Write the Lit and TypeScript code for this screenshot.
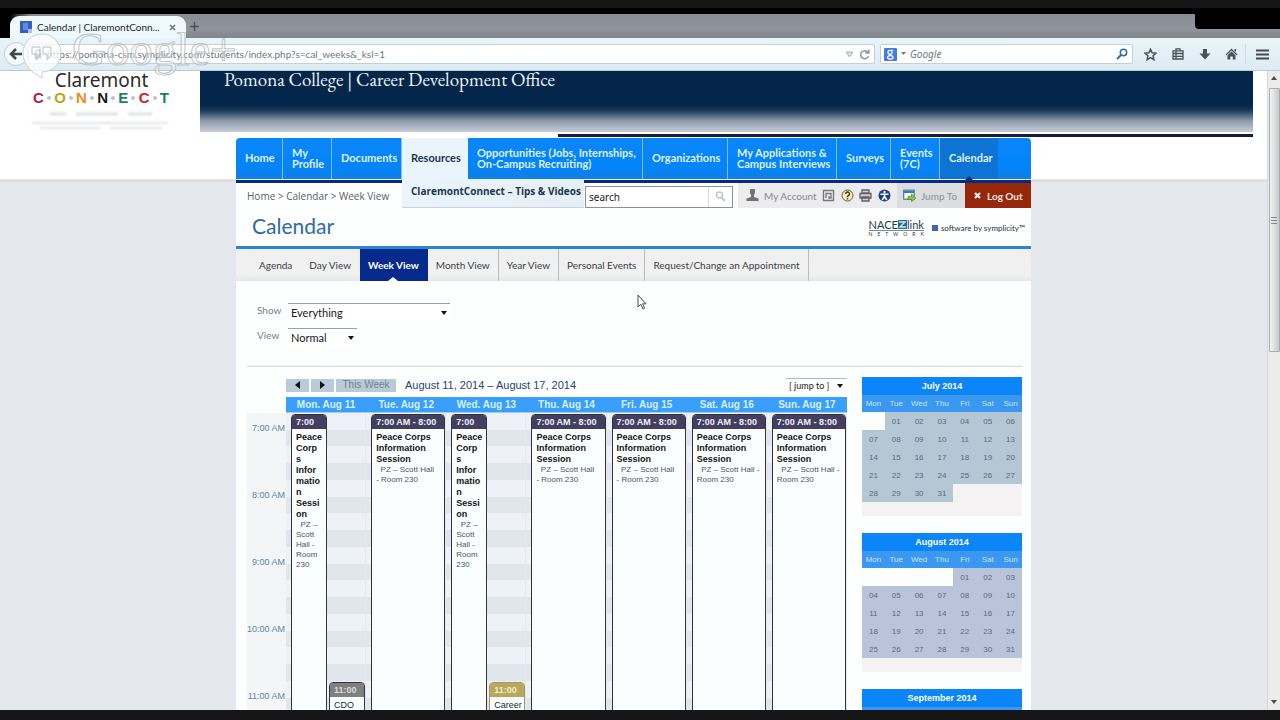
import { LitElement, html, css, svg } from "lit";
import { customElement } from "lit/decorators.js";

const NAV: { label: string; w: number; kind?: string }[] = [
  { label: "Home", w: 47 },
  { label: "My Profile", w: 49 },
  { label: "Documents", w: 70 },
  { label: "Resources", w: 66, kind: "open" },
  { label: "Opportunities (Jobs, Internships, On-Campus Recruiting)", w: 175 },
  { label: "Organizations", w: 85 },
  { label: "My Applications & Campus Interviews", w: 109 },
  { label: "Surveys", w: 54 },
  { label: "Events (7C)", w: 49 },
  { label: "Calendar", w: 58, kind: "current" },
];

const TABS = ["Agenda", "Day View", "Week View", "Month View", "Year View", "Personal Events", "Request/Change an Appointment"];

interface Ev { time: string; title: string; place: string; narrow?: boolean; hours?: number; tone?: string }

const NARROW: Ev = {
  time: "7:00",
  title: "Peace\nCorp\ns\nInfor\nmatio\nn\nSessi\non",
  place: "\u00a0 PZ –\nScott\nHall -\nRoom\n230",
  narrow: true,
};
const WIDE: Ev = {
  time: "7:00 AM - 8:00",
  title: "Peace Corps\nInformation\nSession",
  place: "\u00a0 PZ – Scott Hall\n- Room 230",
};
const WIDE_END: Ev = { ...WIDE, place: "\u00a0 PZ – Scott Hall -\nRoom 230" };

const DAYS: { name: string; events: Ev[] }[] = [
  { name: "Mon. Aug 11", events: [NARROW, { time: "11:00", title: "", place: "CDO", narrow: true, hours: 4, tone: "gray" }] },
  { name: "Tue. Aug 12", events: [WIDE] },
  { name: "Wed. Aug 13", events: [NARROW, { time: "11:00", title: "", place: "Career", narrow: true, hours: 4, tone: "gold" }] },
  { name: "Thu. Aug 14", events: [WIDE] },
  { name: "Fri. Aug 15", events: [WIDE] },
  { name: "Sat. Aug 16", events: [WIDE_END] },
  { name: "Sun. Aug 17", events: [WIDE_END] },
];

const HOURS = ["7:00 AM", "8:00 AM", "9:00 AM", "10:00 AM", "11:00 AM"];
const HOUR_HEIGHT = 67;
const WEEKDAYS = ["Mon", "Tue", "Wed", "Thu", "Fri", "Sat", "Sun"];

const MONTHS = [
  { name: "July 2014", offset: 1, days: 31, tone: "" },
  { name: "August 2014", offset: 4, days: 31, tone: "violet" },
  { name: "September 2014", offset: 0, days: 30, tone: "" },
];

const CONNECT: [string, string][] = [
  ["C", "#b3203f"], ["O", "#c0a512"], ["N", "#f08a1d"], ["N", "#15181c"], ["E", "#1d7f66"], ["C", "#d3202c"], ["T", "#11805f"],
];

@customElement("browser-chrome")
export class BrowserChrome extends LitElement {
  static styles = css`
    :host { display: block; font-family: Lato, "Open Sans", sans-serif; color: #3c434a; }
    button { border: 0; padding: 0; background: none; display: grid; place-items: center; }
    svg { flex: none; }
    .strip { display: flex; height: 24px; background: linear-gradient(90deg, #000 10px, transparent 30px), linear-gradient(#868d94, #8f969d 60%, #7f858a); }
    .tab { display: flex; align-items: center; gap: 5px; width: 176px; box-sizing: border-box; margin: 2px 0 0 10px; padding: 0 14px 0 10px; border-radius: 9px 9px 0 0; background: #eff8fd; font-size: 10px; line-height: 22px; color: #22282d; }
    .tab span { white-space: nowrap; margin-right: 4px; }
    .plus { width: 16px; }
    .corner { width: 85px; height: 15px; margin-left: auto; background: #000; border-radius: 0 0 0 4px; }
    .bar { display: flex; align-items: center; height: 32px; padding: 0 2px 0 4px; background: linear-gradient(#eaf4fa, #dcebf3); border-bottom: 1px solid #b9cbd3; }
    .back { width: 24px; height: 24px; border: 1px solid #bccdd6; border-radius: 50%; background: #f4fafd; }
    .url, .find { display: flex; align-items: center; height: 20px; box-sizing: border-box; border: 1px solid #c3d0d8; border-radius: 2px; background: #fff; }
    .url { flex: 1; padding: 0 4px 0 5px; gap: 5px; }
    .find { width: 253px; margin: 0 4px 0 5px; padding: 0 4px 0 3px; gap: 4px; }
    input { flex: 1; min-width: 0; border: 0; padding: 0; outline: 0; background: none; font: 10px Lato, sans-serif; color: #70777d; }
    .find input { font: italic 10px "Noto Sans", sans-serif; }
    .find input::placeholder { color: #70777d; opacity: 1; }
    .tools { display: flex; align-items: center; }
    .tools button { width: 27px; height: 20px; }
    .tools .menu { width: 33px; border-left: 1px solid #cfdde4; }
  `;
  render() {
    return html`
      <div class="strip">
        <div class="tab">
          <svg width="12" height="12"><rect width="12" height="12" fill="#3562b8" /><rect x="3" y="2" width="5" height="7" fill="#5f8be0" /><rect x="8" y="8" width="4" height="4" fill="#a9c0ee" /></svg>
          <span>Calendar | ClaremontConn...</span>
          <button aria-label="Close tab"><svg width="7" height="7"><path d="M1 1L6 6M6 1L1 6" stroke="#70777c" stroke-width="1.600" /></svg></button>
        </div>
        <button class="plus" aria-label="New tab"><svg width="9" height="9"><path d="M4.500 0V9M0 4.500H9" stroke="#4b5258" stroke-width="1.500" /></svg></button>
        <div class="corner"></div>
      </div>
      <div class="bar">
        <button class="back" aria-label="Back"><svg width="14" height="12"><path d="M7 1L2 6L7 11M2 6H13" fill="none" stroke="#3f464c" stroke-width="2.600" /></svg></button>
        <div class="url">
          <svg width="8" height="10"><path d="M2 5V3a2 2 0 0 1 4 0V5" fill="none" stroke="#5b6268" stroke-width="1.400" /><rect x="0.500" y="4.500" width="7" height="5" fill="#5b6268" /></svg>
          <input aria-label="Address" value="https://pomona-csm.symplicity.com/students/index.php?s=cal_weeks&_ksl=1" />
          <svg width="9" height="7"><path d="M1 1H8L4.500 6Z" fill="#d9dee1" stroke="#aab2b7" /></svg>
          <svg width="11" height="11"><path d="M9 3.500A4 4 0 1 0 9.500 7M9.800 0.500V4H6.300" fill="none" stroke="#8d959b" stroke-width="1.500" /></svg>
        </div>
        <div class="find">
          <svg width="13" height="13"><rect width="13" height="13" rx="1" fill="#4479e6" /><circle cx="6" cy="4.300" r="2" fill="none" stroke="#fff" stroke-width="1.300" /><ellipse cx="6.300" cy="9.400" rx="2.700" ry="1.800" fill="none" stroke="#fff" stroke-width="1.300" /><path d="M7.500 2.300H9.300M7 6L6 7.500" stroke="#fff" /></svg>
          <svg width="5" height="4"><path d="M0 0H5L2.500 3Z" fill="#71787e" /></svg>
          <input aria-label="Search the web" placeholder="Google" />
          <svg width="12" height="12"><circle cx="7.500" cy="4.500" r="3.200" fill="none" stroke="#2d6fa3" stroke-width="1.500" /><path d="M5 7L1 11" stroke="#2d6fa3" stroke-width="1.900" /></svg>
        </div>
        <div class="tools">
          <button aria-label="Bookmark"><svg width="13" height="13"><path d="M6.500 1.200L8.100 4.800L12 5.200L9.100 7.800L9.900 11.700L6.500 9.700L3.100 11.700L3.900 7.800L1 5.200L4.900 4.800Z" fill="none" stroke="#4a5157" stroke-width="1.500" /></svg></button>
          <button aria-label="Bookmarks list"><svg width="12" height="12"><path d="M4 2.500V0.800H8V2.500M1 2.800H11V11H1ZM1 5.500H11M1 8.300H11M4 3V11" fill="none" stroke="#4a5157" stroke-width="1.300" /></svg></button>
          <button aria-label="Downloads"><svg width="12" height="12"><path d="M4 1H8V5.500H11.500L6 11.500L0.500 5.500H4Z" fill="#4a5157" /></svg></button>
          <button aria-label="Home page"><svg width="13" height="12"><path d="M6.500 0.500L12.500 6.500L11.500 7.300L6.500 2.600L1.500 7.300L0.500 6.500ZM6.500 3.600L10.500 7.300V11.500H7.800V8.500H5.200V11.500H2.500V7.300ZM9.500 1H11V4L9.500 2.600Z" fill="#4a5157" /></svg></button>
          <button class="menu" aria-label="Menu"><svg width="13" height="11"><path d="M0 1.500H13M0 5.500H13M0 9.500H13" stroke="#444b51" stroke-width="2" /></svg></button>
        </div>
      </div>`;
  }
}

@customElement("mini-month")
export class MiniMonth extends LitElement {
  static properties = { name: {}, offset: { type: Number }, days: { type: Number }, tone: {} };
  declare name: string;
  declare offset: number;
  declare days: number;
  declare tone: string;
  static styles = css`
    :host { display: block; }
    table { width: 100%; table-layout: fixed; border-collapse: collapse; background: #f5f2f3; font: 8px "Liberation Sans", sans-serif; text-align: center; }
    th, td { padding: 0; }
    .title th { height: 18px; background: #0b85f7; color: #fff; font-weight: bold; font-size: 9px; }
    .week th { height: 17px; background: #3a98f0; color: #c9e4fb; font-weight: normal; }
    td { height: 18px; }
    tr:last-child td { height: 14px; }
    .day { background: #b5c7d5; color: #58697a; }
    .violet .day { background: #b9c4da; }
    .lead { background: #fcfdfd; }
  `;
  render() {
    const rows = [0, 1, 2, 3, 4, 5];
    const cell = (n: number) => {
      if (n < 1) return html`<td class="lead"></td>`;
      if (n > this.days) return html`<td></td>`;
      return html`<td class="day">${String(n).padStart(2, "0")}</td>`;
    };
    return html`<table class=${this.tone}>
      <thead>
        <tr class="title"><th colspan="7">${this.name}</th></tr>
        <tr class="week">${WEEKDAYS.map((d) => html`<th>${d}</th>`)}</tr>
      </thead>
      <tbody>${rows.map((r) => html`<tr>${WEEKDAYS.map((_, c) => cell(r * 7 + c + 1 - this.offset))}</tr>`)}</tbody>
    </table>`;
  }
}

@customElement("week-grid")
export class WeekGrid extends LitElement {
  static styles = css`
    :host { display: grid; grid-template-columns: 39px minmax(0, 1fr); font-family: "Liberation Sans", sans-serif; }
    .hours { margin-top: 16px; padding-top: 10px; background: #f4f5f7; }
    .hour { height: 67px; font-size: 9px; line-height: 10px; text-align: right; padding-right: 1px; color: #5a86a3; white-space: nowrap; }
    .days { display: grid; grid-template-columns: repeat(7, minmax(0, 1fr)); }
    .head { height: 16px; background: #3a9ffb; color: #d6efff; font-size: 10px; font-weight: bold; line-height: 15px; text-align: center; border-bottom: 1px solid #9fcdf5; box-sizing: border-box; }
    .track { display: flex; align-items: flex-start; gap: 2px; height: 342px; padding: 1px 0 0 5px; border-right: 1px solid #e6e8ee; box-sizing: border-box; overflow: hidden;
      background: repeating-linear-gradient(#eef2f7 0 17px, #e1e6ec 17px 33px, #eef2f7 33px 50px, #e1e6ec 50px 67px); }
    .event { flex: 1; min-width: 0; height: 400px; box-sizing: border-box; border: 1px solid #34343c; border-radius: 4px 4px 0 0; background: #fbfeff; overflow: hidden; }
    .narrow { flex: 0 0 36px; }
    .time { background: #433f60; color: #f3f1f8; font-size: 9px; font-weight: bold; line-height: 14px; height: 14px; padding-left: 4px; white-space: nowrap; }
    .gray .time { background: #7f8080; color: #dcdcdc; }
    .gold .time { background: #b9a85c; color: #f3ecc8; }
    .gold { border-color: #a3976a; }
    .title, .place { padding-left: 4px; white-space: pre; }
    .title { font-size: 9px; font-weight: bold; line-height: 11px; color: #111318; margin-top: 3px; }
    .place { font-size: 8px; line-height: 10px; color: #50555c; }
    .gray .place, .gold .place { font-size: 9px; color: #26292e; }
  `;
  render() {
    return html`
      <div class="hours">${HOURS.map((h) => html`<div class="hour">${h}</div>`)}</div>
      <div class="days">
        ${DAYS.map((d) => html`<section>
          <div class="head">${d.name}</div>
          <div class="track">
            ${d.events.map((e) => html`<article class="event ${e.narrow ? "narrow" : ""} ${e.tone ?? ""}" style="margin-top:${(e.hours ?? 0) * HOUR_HEIGHT}px">
              <div class="time">${e.time}</div>
              <div class="title">${e.title}</div>
              <div class="place">${e.place}</div>
            </article>`)}
          </div>
        </section>`)}
      </div>`;
  }
}

@customElement("app-root")
export class AppRoot extends LitElement {
  static styles = css`
    :host { display: flex; flex-direction: column; height: 100vh; min-width: 1000px; position: relative; overflow: hidden; background: #000; border-bottom: 10px solid #161617; border-top: 8px solid #161617; box-sizing: border-box; font-family: Lato, "Open Sans", sans-serif; }
    a { color: inherit; text-decoration: none; }
    button { border: 0; padding: 0; font-family: inherit; }
    svg { flex: none; }
    browser-chrome { margin-top: 6px; }
    .viewport { flex: 1; min-height: 0; display: grid; grid-template-columns: 1fr 13px; background: #fff; }
    .page { overflow: hidden; background: linear-gradient(#fff 108px, #cfd1d4 109px, #e6e7ea 111px, #e4e8ec 125px); }
    .masthead { display: flex; height: 67px; padding-right: 14px; }
    .logo { width: 200px; text-align: center; }
    .claremont { font: 19px/18px "Noto Sans", sans-serif; color: #2b2b2d; padding-left: 3px; }
    .connect { display: flex; justify-content: space-between; align-items: center; width: 136px; margin: 0 auto 0 33px; font: bold 15px/17px "Liberation Sans", sans-serif; }
    .dot { width: 4px; height: 4px; border-radius: 2px; background: #bfc3c6; }
    .tagline { display: block; margin: 3px 0 0 32px; filter: blur(1px); }
    .banner { flex: 1; }
    .sky { height: 61px; box-sizing: border-box; padding-left: 24px; background: linear-gradient(#04264a 34px, #1d3c5c 40px, #8e9bab 50px, #c3c8d2 60px); color: #eef3f8; font: 19px/17px "EB Garamond", "Liberation Serif", serif; }
    .rule { height: 3px; margin: 2px 0 0 358px; background: #151d38; }
    .main { width: 795px; margin: 0 auto; background: #fdfefe; position: relative; min-height: 640px; }
    .nav { display: flex; height: 41px; background: linear-gradient(#0b86f8, #0384fb 70%, #117fe2); border-radius: 4px 4px 0 0; color: #dff1ff; font-size: 11px; line-height: 11px; font-weight: bold; border-bottom: 1px solid #e8f2fb; position: relative; }
    .nav a { display: flex; align-items: center; box-sizing: border-box; padding: 0 1px 2px 9px; border-right: 1px solid #7fbff9; }
    .nav .open { background: #e9f4fc; color: #1e3650; border: 0; }
    .nav .current { background: #0d74d6; border: 0; position: relative; }
    .nav .current::after { content: ""; position: absolute; left: 24px; bottom: -2px; border: 5px solid transparent; border-top: 0; border-bottom-color: #0b2f7c; }
    .nav .submenu { position: absolute; left: 166px; top: 41px; width: 182px; height: 29px; padding: 0 0 4px 9px; background: linear-gradient(90deg, #e9f4fc, #e6eff5); border: 0; border-bottom: 1px solid #c9d2d8; font: bold 10px "Open Sans", sans-serif; color: #1e3650; white-space: nowrap; }
    .under { height: 3px; background: #0a2a80; }
    .crumbs { display: flex; align-items: center; height: 25px; padding-left: 11px; font-size: 10px; color: #5b6167; white-space: nowrap; }
    .path { width: 338px; font: 10px "Open Sans", sans-serif; }
    .search { display: flex; width: 148px; height: 22px; margin-top: 2px; box-sizing: border-box; border: 1px solid #8c9196; background: #fff; }
    .search input { flex: 1; min-width: 0; border: 0; padding: 0 3px; font: 10px "Noto Sans", sans-serif; color: #222; }
    .search button { width: 24px; background: none; border-left: 1px solid #d8dadc; display: grid; place-items: center; }
    .account { flex: 1; display: flex; align-items: center; justify-content: space-between; height: 25px; margin-left: 5px; padding: 0 6px 0 8px; background: #ececee; color: #85888c; }
    .account a, .jump { display: flex; align-items: center; gap: 5px; }
    .jump { height: 25px; width: 68px; box-sizing: border-box; padding: 0 5px 0 6px; background: #dcdde0; color: #8b8f93; }
    .logout { display: flex; align-items: center; gap: 6px; height: 25px; width: 66px; box-sizing: border-box; padding: 0 0 0 9px; background: #96270a; color: #f8e8e4; font-size: 10px; font-weight: bold; }
    .heading { display: flex; align-items: center; height: 37px; padding: 1px 6px 0 16px; border-bottom: 3px solid #2a86d0; }
    h1 { flex: 1; margin: 0; font-size: 21px; line-height: 32px; padding-bottom: 3px; font-weight: normal; color: #2f6aa3; }
    .nace { color: #2b3c4a; font: 11px/11px Lato, sans-serif; margin-right: 8px; }
    .nace small { display: block; border-top: 1px solid #7b8790; font-size: 5px; line-height: 6px; text-align: justify; text-align-last: justify; }
    .nace div { display: flex; align-items: center; }
    .soft { display: flex; align-items: center; gap: 3px; font: 8px Lato, sans-serif; color: #2c3238; }
    .tabs { display: flex; height: 32px; padding-left: 15px; background: linear-gradient(#efeff0, #f1f1f1 80%, #e6e6e6); font-size: 10px; line-height: 32px; color: #3b3f44; }
    .tabs a { padding: 0 8px; border-right: 1px solid #b9bcbf; white-space: nowrap; }
    .tabs a:nth-child(-n+2) { border-color: transparent; }
    .tabs .on { position: relative; background: #052a8c; color: #fff; font-weight: bold; border-color: #052a8c; }
    .on::after { content: ""; position: absolute; left: 28px; bottom: 0; border: 5px solid transparent; border-top: 0; border-bottom: 4px solid #fff; }
    .form { display: grid; grid-template-columns: 41px 1fr; row-gap: 7px; padding: 22px 0 20px; margin: 0 9px 0 11px; font-size: 10px; color: #7a7f84; border-bottom: 1px solid #d9dbdd; box-shadow: 0 -3px 3px -3px #ddd inset; }
    label { line-height: 14px; padding-left: 10px; }
    .form select { border: 0; border-top: 1px solid #9b9fa3; }
    select { appearance: none; border-radius: 0; height: 18px; padding: 0 3px; font: 11px Lato, sans-serif; color: #17191c; background: #fff url("data:image/svg+xml,%3Csvg xmlns='http://www.w3.org/2000/svg' width='6' height='4'%3E%3Cpath d='M0 0H6L3 4Z' fill='%23111'/%3E%3C/svg%3E") no-repeat right 3px center; }
    .show { width: 162px; }
    .view { width: 69px; }
    .body { display: flex; gap: 15px; padding: 10px 9px 0 11px; }
    .week { flex: 1; min-width: 0; }
    .months { flex: none; width: 160px; display: grid; align-content: start; gap: 17px; }
    .bar { display: flex; align-items: center; height: 16px; padding-bottom: 4px; gap: 2px; padding-left: 39px; font-family: "Liberation Sans", sans-serif; }
    .bar button { height: 13px; width: 23px; background: #b9cbd6; display: grid; place-items: center; font-size: 10px; line-height: 12px; color: #70838f; }
    .bar .this { width: 60px; }
    h2 { flex: 1; margin: 0 0 0 7px; font-size: 11px; line-height: 14px; font-weight: normal; color: #2a4478; }
    .bar select { width: 61px; height: 14px; border: 0; border-top: 1px solid #b5b8bb; font-size: 9px; background-position: right 4px center; }
    .scroll { display: flex; flex-direction: column; align-items: center; background: #ececed; border-left: 1px solid #d9d9da; box-sizing: border-box; padding: 5px 0 6px; }
    .thumb { width: 11px; height: 264px; margin: 8px 0 auto; border: 1px solid #a9abad; border-radius: 1px; background: linear-gradient(90deg, #f4f4f5, #c9cacc); box-sizing: border-box; display: grid; place-items: center; }
    .mark { position: absolute; left: 0; top: 23px; pointer-events: none; }
    .gplus { position: absolute; left: 72px; top: 13px; font: 47px/56px "Liberation Serif", serif; color: rgba(255,255,255,.3); -webkit-text-stroke: 1px rgba(180,186,190,.85); pointer-events: none; }
    .cursor { position: absolute; left: 637px; top: 286px; }
  `;

  icon(name: string) {
    const shapes: Record<string, unknown> = {
      person: svg`<path d="M4 1.500a2.500 2.500 0 0 1 5 0V4L8 6V8L12.500 9.500V12H0.500V9.500L5 8V6L4 4Z" fill="#707276"/>`,
      card: svg`<path d="M1.500 1.500H11.500V11.500H1.500ZM4 9V4.500H9V9H7V7" fill="none" stroke="#77797d" stroke-width="1.400"/>`,
      help: svg`<circle cx="6.500" cy="6.500" r="5.500" fill="#f7edae" stroke="#5d5a45"/><path d="M4.700 5a1.900 1.900 0 1 1 2.600 1.700L6.500 7.500V8.300M6.500 9.200V10.500" fill="none" stroke="#3a372a" stroke-width="1.400"/>`,
      print: svg`<path d="M3 1H10V4H3ZM1 4.500H12V9H1ZM3 8H10V12H3Z" fill="#d0d1d3" stroke="#5f6165" stroke-width="1.300"/>`,
      access: svg`<circle cx="6.500" cy="6.500" r="6" fill="#1c3f86"/><circle cx="6.500" cy="3" r="1.200" fill="#fff"/><path d="M2.500 5.200H10.500M6.500 5V7.500L4.200 11M6.500 7.500L8.800 11" stroke="#fff" stroke-width="1.500" fill="none"/>`,
      jump: svg`<rect x="0.700" y="1.200" width="10.500" height="9" fill="#fff" stroke="#3e7aa6" stroke-width="1.200"/><path d="M1 3H11" stroke="#3e7aa6" stroke-width="2"/><path d="M5 7.500H8.500V5L12.800 9L8.500 12.800V10.500H5Z" fill="#8cc63c" stroke="#4b8526" stroke-width=".7"/>`,
    };
    return html`<svg width="13" height="13">${shapes[name]}</svg>`;
  }

  render() {
    return html`
      <browser-chrome></browser-chrome>
      <div class="viewport">
        <div class="page">
          <header class="masthead">
            <div class="logo">
              <div class="claremont">Claremont</div>
              <div class="connect">${CONNECT.map(([c, color], i) => html`${i ? html`<i class="dot"></i>` : ""}<span style="color:${color}">${c}</span>`)}</div>
              <svg class="tagline" width="138" height="20"><path d="M18 5H34M44 5H86M96 5H120" stroke="#dfe1e3" stroke-width="3"/><path d="M0 14H136M8 19H68M78 19H130" stroke="#e3e4e6" stroke-width="2"/></svg>
            </div>
            <div class="banner">
              <div class="sky">Pomona College | Career Development Office</div>
              <div class="rule"></div>
            </div>
          </header>
          <main class="main">
            <nav class="nav">
              ${NAV.map((n) => html`<a href="#" class=${n.kind ?? ""} style="width:${n.w}px">${n.label}</a>`)}
              <a href="#" class="submenu">ClaremontConnect – Tips &amp; Videos</a>
            </nav>
            <div class="under"></div>
            <div class="crumbs">
              <div class="path">Home &gt; Calendar &gt; Week View</div>
              <form class="search">
                <input aria-label="Search" value="search" />
                <button type="button" aria-label="Go"><svg width="11" height="11"><circle cx="4.500" cy="4" r="3" fill="none" stroke="#c2c4c7" stroke-width="1.500"/><path d="M6.500 6.500L10 10" stroke="#c2c4c7" stroke-width="2"/></svg></button>
              </form>
              <div class="account">
                <a href="#">${this.icon("person")} My Account</a>
                ${this.icon("card")}${this.icon("help")}${this.icon("print")}${this.icon("access")}
              </div>
              <a href="#" class="jump">${this.icon("jump")}Jump To</a>
              <a href="#" class="logout"><svg width="7" height="7"><path d="M1 1L6 6M6 1L1 6" stroke="#fff" stroke-width="2"/></svg>Log Out</a>
            </div>
            <div class="heading">
              <h1>Calendar</h1>
              <div class="nace"><div>NACE<svg width="9" height="9"><rect width="9" height="9" fill="#1f6d98"/><path d="M1 2H7L2 7H8" fill="none" stroke="#d5ecf5" stroke-width="1.300"/></svg>link</div><small>N E T W O R K</small></div>
              <div class="soft"><svg width="6" height="6"><rect width="6" height="6" fill="#4764b4"/></svg>software by symplicity™</div>
            </div>
            <nav class="tabs">${TABS.map((t) => html`<a href="#" class=${t === "Week View" ? "on" : ""}>${t}</a>`)}</nav>
            <form class="form">
              <label for="show">Show</label>
              <select id="show" class="show"><option>Everything</option></select>
              <label for="view">View</label>
              <select id="view" class="view"><option>Normal</option></select>
            </form>
            <div class="body">
              <div class="week">
                <div class="bar">
                  <button aria-label="Previous week"><svg width="5" height="8"><path d="M5 0V8L0 4Z" fill="#0d1014"/></svg></button>
                  <button aria-label="Next week"><svg width="5" height="8"><path d="M0 0V8L5 4Z" fill="#0d1014"/></svg></button>
                  <button class="this">This Week</button>
                  <h2>August 11, 2014 – August 17, 2014</h2>
                  <select aria-label="Jump to"><option>[ jump to ]</option></select>
                </div>
                <week-grid></week-grid>
              </div>
              <aside class="months">${MONTHS.map((m) => html`<mini-month .name=${m.name} .offset=${m.offset} .days=${m.days} .tone=${m.tone}></mini-month>`)}</aside>
            </div>
          </main>
        </div>
        <div class="scroll">
          <svg width="6" height="4"><path d="M0 4H6L3 0Z" fill="#4a4c50"/></svg>
          <div class="thumb"><svg width="6" height="7"><path d="M0 .500H6M0 3.500H6M0 6.500H6" stroke="#85878a"/></svg></div>
          <svg width="6" height="4"><path d="M0 0H6L3 4Z" fill="#4a4c50"/></svg>
        </div>
      </div>
      <svg class="mark" width="66" height="60"><path d="M42 3a19 19 0 0 1 0 38V47C33 42 23 35 23 22A19 19 0 0 1 42 3Z" fill="rgba(255,255,255,.75)" stroke="#c9cfd2"/><path d="M32 16H40V24L36 29V23H32ZM43 16H51V24L47 29V23H43Z" fill="none" stroke="#b9bfc3"/></svg>
      <div class="gplus">Google+</div>
      <svg class="cursor" width="10" height="16"><path d="M1 1V13L3.800 10.300L6 15L7.600 14.200L5.600 9.800H9Z" fill="#fff" stroke="#4a4c50"/></svg>
    `;
  }
}
